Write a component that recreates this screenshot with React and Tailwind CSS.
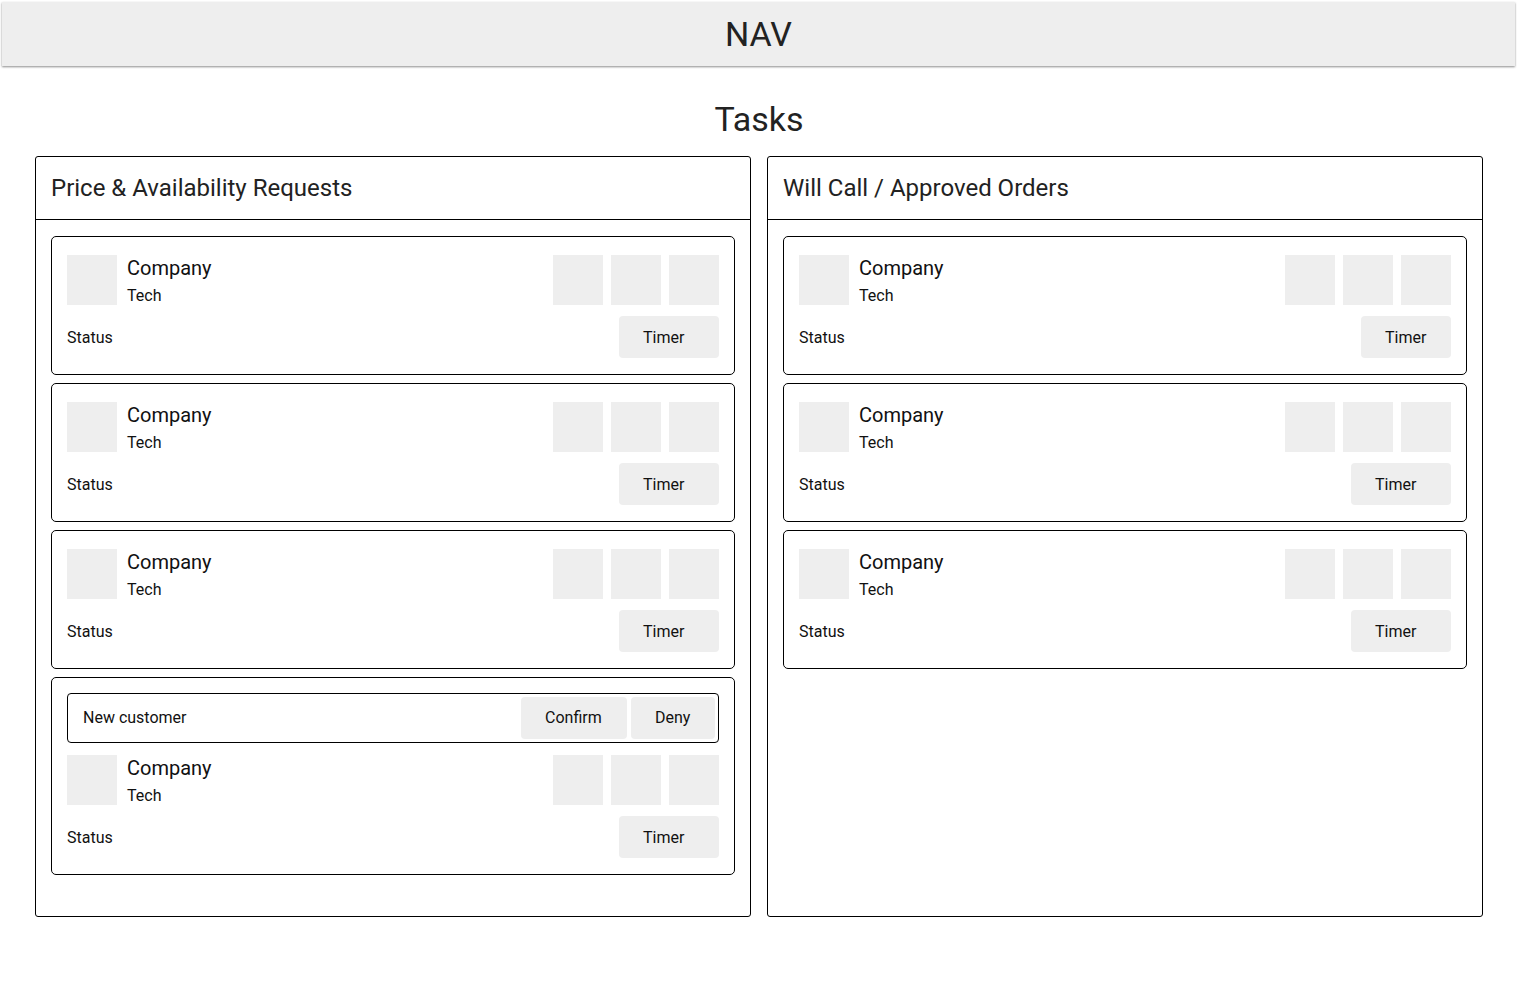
import React from 'react';

const Box = () => <div className="w-[50px] h-[50px] bg-[#eeeeee] shrink-0" />;

const TaskCard = ({ newCustomer = false, timerWidth = 'w-[100px]' }) => (
  <div className={`border border-black rounded-[5px] px-[15px] pb-4 ${newCustomer ? 'pt-[15px]' : 'pt-[18px]'}`}>
    {newCustomer && (
      <div className="mb-[12px] h-[50px] border border-black rounded-[4px] flex items-center pl-[15px] pr-[3px]">
        <span className="text-[16px]">New customer</span>
        <div className="ml-auto flex gap-[4px]">
          <button className="w-[106px] h-[42px] bg-[#eeeeee] rounded-[4px] text-[16px] text-left pl-6">Confirm</button>
          <button className="w-[84px] h-[42px] bg-[#eeeeee] rounded-[4px] text-[16px] text-left pl-6">Deny</button>
        </div>
      </div>
    )}
    <div className="flex">
      <Box />
      <div className="ml-[10px] h-[50px]">
        <div className="text-[20px] leading-[26px]">Company</div>
        <div className="text-[16px] leading-[20px] mt-[5px]">Tech</div>
      </div>
      <div className="ml-auto flex gap-2">
        <Box />
        <Box />
        <Box />
      </div>
    </div>
    <div className="mt-[11px] flex items-center justify-between">
      <span className="text-[16px] pt-[2px]">Status</span>
      <button className={`${timerWidth} h-[42px] bg-[#eeeeee] rounded-[4px] text-[16px] text-left pl-6 pt-[1px]`}>Timer</button>
    </div>
  </div>
);

const Panel = ({ title, children }) => (
  <div className="w-[716px] border border-black rounded-[3px] flex flex-col">
    <div className="h-[63px] border-b border-black px-[15px] flex items-center text-[24px] text-[#222222]">
      {title}
    </div>
    <div className="pt-4 px-[15px] pb-[41px] flex flex-col gap-2">{children}</div>
  </div>
);

export default function App() {
  return (
    <div className="min-h-screen bg-white text-[#111111] font-['Roboto','Liberation_Sans',sans-serif]">
      <div className="ml-[2px] mr-[3px] mt-[2px] h-[64px] bg-[#eeeeee] shadow-[0_1px_2px_rgba(0,0,0,0.45)] flex items-center justify-center text-[34px] text-[#222222]">
        NAV
      </div>
      <h1 className="mt-[33px] mb-[17px] text-center text-[34px] leading-[40px] text-[#222222]">Tasks</h1>
      <div className="flex gap-4 px-[35px]">
        <Panel title="Price & Availability Requests">
          <TaskCard />
          <TaskCard />
          <TaskCard />
          <TaskCard newCustomer />
        </Panel>
        <Panel title="Will Call / Approved Orders">
          <TaskCard timerWidth="w-[90px]" />
          <TaskCard />
          <TaskCard />
        </Panel>
      </div>
    </div>
  );
}
